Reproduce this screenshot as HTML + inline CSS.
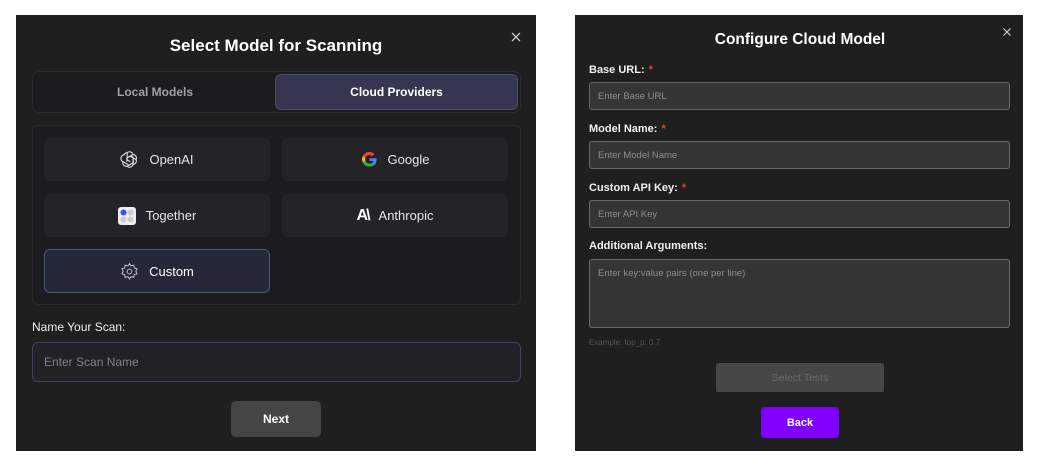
<!DOCTYPE html>
<html><head><style>
*{box-sizing:border-box;margin:0;padding:0}
body{width:1039px;height:468px;background:#fff;position:relative;font-family:"Liberation Sans",sans-serif;overflow:hidden}
.p{position:absolute;background:#1f1f20}
.a{position:absolute}
.c{display:flex;align-items:center;justify-content:center}
.btn{position:absolute;background:#242428;border-radius:6px;color:#e4e4e8;font-size:13px;gap:10px}
.lbl{position:absolute;left:14px;color:#f0f0f0;font-size:11px;font-weight:bold}
.lbl span{color:#e0443a;margin-left:4px}
.inp{position:absolute;left:14px;width:421px;height:28px;background:#353535;border:1px solid #6a6a6a;border-radius:3px;color:#8e8e8e;font-size:9.5px;padding-left:8px;display:flex;align-items:center}
</style></head><body>
<div class="p" style="left:16px;top:15px;width:520px;height:436px"></div>
<div class="a c" style="left:16px;top:35px;width:520px;height:22px;color:#fff;font-size:17px;font-weight:bold">Select Model for Scanning</div>
<svg class="a" style="left:511px;top:32px" width="10" height="10" viewBox="0 0 10 10" stroke="#ddd" stroke-width="1.2"><path d="M1 1L9 9M9 1L1 9"/></svg>
<div class="a" style="left:32px;top:71px;width:489px;height:42px;border:1px solid #2c2c30;border-radius:8px;background:#1c1c1e"></div>
<div class="a c" style="left:35px;top:74px;width:240px;height:36px;color:#a0a0a8;font-size:12px;font-weight:bold">Local Models</div>
<div class="a c" style="left:275px;top:74px;width:243px;height:36px;background:#363650;border:1px solid #4a4a6a;border-radius:6px;color:#fff;font-size:12px;font-weight:bold">Cloud Providers</div>
<div class="a" style="left:32px;top:125px;width:489px;height:180px;border:1px solid #2a2a2e;border-radius:6px;background:#1c1c1f"></div>
<div class="btn c" style="left:44px;top:138px;width:226px;height:43px"><svg width="19" height="19" viewBox="0 0 24 24" fill="none" stroke="#ddd" stroke-width="1.4"><path d="M9 3.5a4.5 4.5 0 0 1 7.5 2.2 4.5 4.5 0 0 1 3.8 6.5 4.5 4.5 0 0 1-3.8 6.1A4.5 4.5 0 0 1 9 20.5a4.5 4.5 0 0 1-5.3-5.8A4.5 4.5 0 0 1 5 6.2 4.5 4.5 0 0 1 9 3.5z"/><path d="M9 3.5v9l4 2.3M16.5 5.7L8.7 10.2v4.6M20.3 12.2L12.5 7.7 8.5 10M16.5 18.3V9.3l-4-2.3M9 20.5l7.8-4.5v-4.6M3.7 14.7l7.8 4.5 4-2.3"/></svg>OpenAI</div>
<div class="btn c" style="left:282px;top:138px;width:226px;height:43px"><svg width="17" height="17" viewBox="0 0 24 24"><path d="M22 12.2c0-.7-.1-1.4-.2-2H12v3.9h5.6a4.8 4.8 0 0 1-2.1 3.1v2.6h3.4c2-1.8 3.1-4.5 3.1-7.6z" fill="#4285f4"/><path d="M12 22c2.8 0 5.2-.9 6.9-2.5l-3.4-2.6c-.9.6-2.1 1-3.5 1-2.7 0-5-1.8-5.800-4.3H2.7v2.7A10 10 0 0 0 12 22z" fill="#34a853"/><path d="M6.2 13.6a6 6 0 0 1 0-3.8V7.1H2.7a10 10 0 0 0 0 9.2z" fill="#fbbc05"/><path d="M12 5.8c1.5 0 2.9.5 4 1.6l3-3A10 10 0 0 0 2.7 7.1l3.5 2.7C7 7.400 9.3 5.8 12 5.8z" fill="#ea4335"/></svg>Google</div>
<div class="btn c" style="left:44px;top:194px;width:226px;height:43px"><svg width="18" height="18" viewBox="0 0 18 18"><rect width="18" height="18" rx="3" fill="#eee"/><circle cx="5.5" cy="5.5" r="3" fill="#3355ff"/><circle cx="12.5" cy="5.5" r="3" fill="#ccc"/><circle cx="5.5" cy="12.5" r="3" fill="#ccc"/><circle cx="12.5" cy="12.5" r="3" fill="#ccc"/></svg>Together</div>
<div class="btn c" style="left:282px;top:194px;width:226px;height:43px"><span style="font-weight:bold;font-size:16px;color:#fff;letter-spacing:-2px">A\</span>Anthropic</div>
<div class="btn c" style="left:44px;top:249px;width:226px;height:44px;background:#26283a;border:1.5px solid #4a5480;color:#fff"><svg width="19" height="19" viewBox="0 0 24 24" fill="none" stroke="#bbb" stroke-width="1.3"><circle cx="12" cy="12" r="3"/><path d="M12 2l2 3 3.5-1 .5 3.5 3.5 1-1.5 3.5 1.5 3-3.5 1-.5 3.5-3.5-1-2 3-2-3-3.5 1-.5-3.5-3.5-1 1.5-3-1.5-3.5 3.5-1 .5-3.5 3.5 1z"/></svg>Custom</div>
<div class="a" style="left:32px;top:320px;color:#eee;font-size:12px">Name Your Scan:</div>
<div class="a" style="left:32px;top:342px;width:489px;height:40px;border:1.5px solid #3e4266;border-radius:6px;background:#222226;color:#80808a;font-size:12px;padding-left:11px;display:flex;align-items:center">Enter Scan Name</div>
<div class="a c" style="left:231px;top:401px;width:90px;height:36px;background:#454545;border-radius:5px;color:#fff;font-size:12px;font-weight:bold">Next</div>

<div class="p" style="left:575px;top:15px;width:448px;height:436px">
<div class="a c" style="left:0;top:15px;width:450px;height:20px;color:#fff;font-size:15.5px;font-weight:bold">Configure Cloud Model</div>
<svg class="a" style="left:428px;top:13px" width="8" height="8" viewBox="0 0 8 8" stroke="#ddd" stroke-width="1"><path d="M0.5 0.5L7.5 7.5M7.5 0.5L0.5 7.5"/></svg>
<div class="lbl" style="top:49px">Base URL:<span>*</span></div>
<div class="inp" style="top:67px">Enter Base URL</div>
<div class="lbl" style="top:108px">Model Name:<span>*</span></div>
<div class="inp" style="top:126px">Enter Model Name</div>
<div class="lbl" style="top:167px">Custom API Key:<span>*</span></div>
<div class="inp" style="top:185px">Enter API Key</div>
<div class="lbl" style="top:225px">Additional Arguments:</div>
<div class="inp" style="top:244px;height:69px;align-items:flex-start;padding-top:8px">Enter key:value pairs (one per line)</div>
<div class="a" style="left:14px;top:323px;color:#555;font-size:8px">Example: top_p: 0.7</div>
<div class="a c" style="left:141px;top:348px;width:168px;height:29px;background:#474747;border-radius:2px;color:#6a6a6a;font-size:10.5px">Select Tests</div>
<div class="a c" style="left:186px;top:392px;width:78px;height:31px;background:#7f00ff;border-radius:4px;color:#fff;font-size:11px;font-weight:bold">Back</div>
</div>
</body></html>
